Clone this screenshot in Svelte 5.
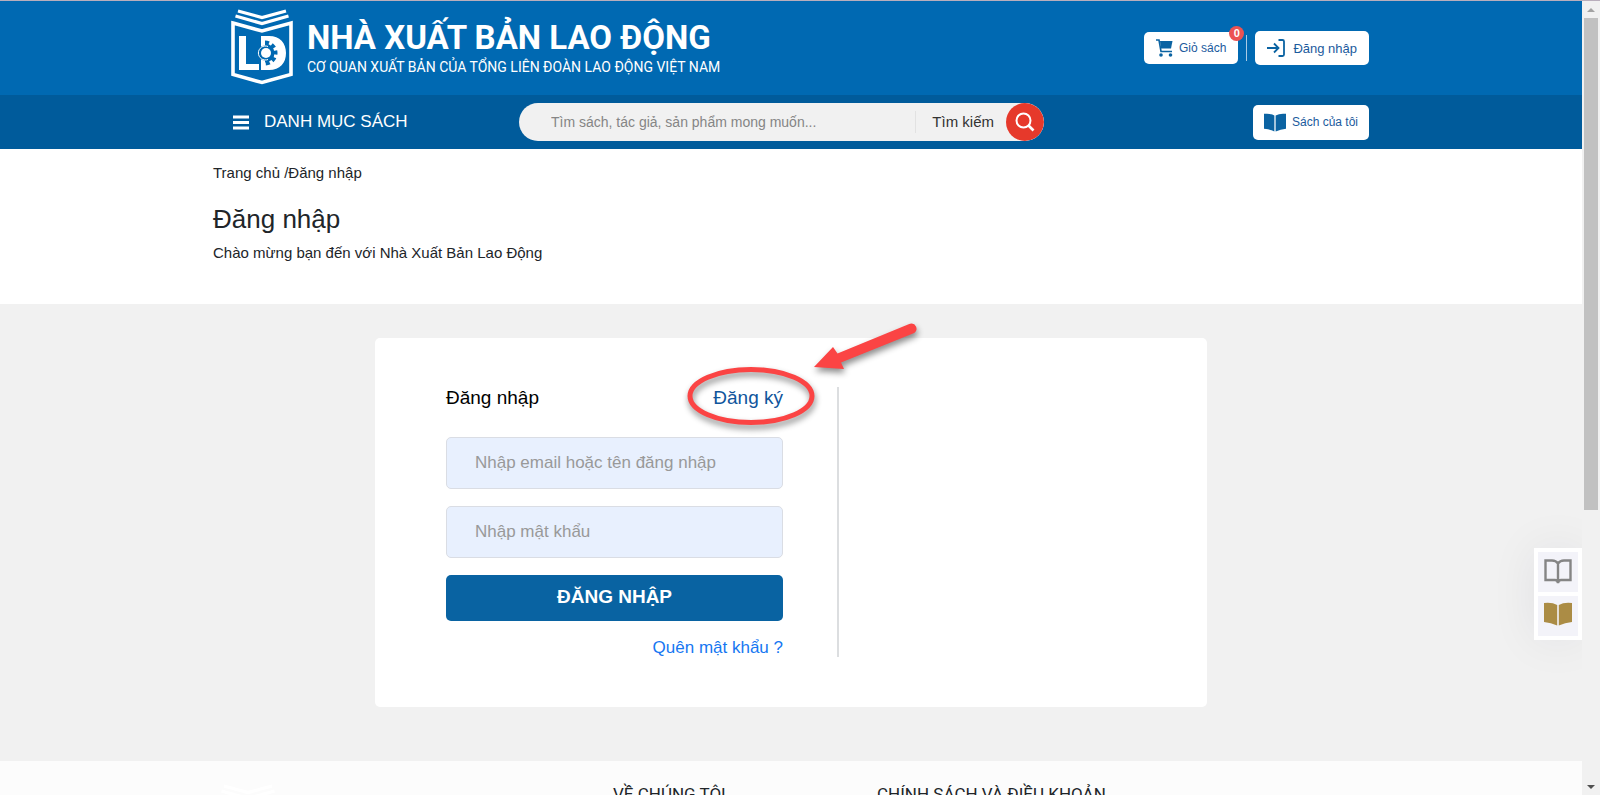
<script lang="ts">
  let keyword = $state('');
  let username = $state('');
  let password = $state('');
  let cartCount = $state(0);

  const footerColumns = ['VỀ CHÚNG TÔI', 'CHÍNH SÁCH VÀ ĐIỀU KHOẢN'];

  function submit(event: SubmitEvent) {
    event.preventDefault();
  }
</script>

{#snippet logo()}
  <svg class="logo" viewBox="0 0 62 78" aria-hidden="true">
    <g fill="none" stroke="currentColor">
      <path d="M7 2 31 8.500 55 2" stroke-width="3.200" />
      <path d="M4.500 7 31 14.500 57.500 7" stroke-width="3.200" />
      <path d="M2 14 31 22 60 14V65.500L31 73.500 2 65.500Z" stroke-width="3.600" />
    </g>
    <path fill="currentColor" d="M8 27h7v28h13v6H8zM30 27h8c11 0 17 7 17 17S49 61 38 61h-8z" />
    <!-- half gear cut out of the D -->
    <path class="cut" d="M34 34.500a9.500 9.500 0 0 1 0 19z" />
    <path class="teeth" d="M34 33.500a10.500 10.500 0 0 1 0 21" />
    <circle class="cut" cx="34" cy="44" r="7.500" />
    <circle cx="35" cy="44" r="5" fill="currentColor" />
    <path d="M37 37.500a7 7 0 1 0 0 13" fill="none" stroke="currentColor" stroke-width="1" />
  </svg>
{/snippet}

{#snippet openBook()}
  <svg class="book" viewBox="0 0 28 24" aria-hidden="true">
    <path fill="currentColor" d="M0 1Q8 0 13.200 3V23.500Q7 20.500 0 20ZM28 1Q20 0 14.800 3V23.500Q21 20.500 28 20Z" />
  </svg>
{/snippet}

<div class="window">
  <div class="page">
    <header>
      <div class="container top-bar">
        <a class="brand" href="#home">
          {@render logo()}
          <span class="brand-text">
            <span class="brand-name">NHÀ XUẤT BẢN LAO ĐỘNG</span>
            <span class="brand-sub">CƠ QUAN XUẤT BẢN CỦA TỔNG LIÊN ĐOÀN LAO ĐỘNG VIỆT NAM</span>
          </span>
        </a>
        <div class="actions">
          <a class="pill cart" href="#cart">
            <svg width="17" height="18" viewBox="0 0 17 18" aria-hidden="true">
              <path fill="currentColor" d="M4 2h12.500L15 9.500H5z" />
              <path d="M0 1H3L5 12.500H16" fill="none" stroke="currentColor" stroke-width="1.600" />
              <circle cx="5" cy="16" r="1.800" fill="currentColor" />
              <circle cx="14.500" cy="16" r="1.800" fill="currentColor" />
            </svg>
            Giỏ sách
            <span class="badge">{cartCount}</span>
          </a>
          <span class="separator"></span>
          <a class="pill login" href="#login">
            <svg width="18" height="18" viewBox="0 0 18 18" aria-hidden="true">
              <path d="M0 9H11M7 4.500 11.500 9 7 13.500M11.500 1H15.500Q17 1 17 2.500V15.500Q17 17 15.500 17H11.500" fill="none" stroke="currentColor" stroke-width="1.800" />
            </svg>
            Đăng nhập
          </a>
        </div>
      </div>
    </header>

    <nav>
      <div class="container nav-bar">
        <button class="menu" type="button">
          <svg width="16" height="15" viewBox="0 0 16 15" aria-hidden="true">
            <path d="M0 2H16M0 7.500H16M0 13H16" stroke="currentColor" stroke-width="3" />
          </svg>
          DANH MỤC SÁCH
        </button>
        <form class="search" onsubmit={submit}>
          <input type="text" aria-label="Tìm sách" placeholder="Tìm sách, tác giả, sản phẩm mong muốn..." bind:value={keyword} />
          <button type="submit">
            <span class="search-label">Tìm kiếm</span>
            <span class="search-icon">
              <svg width="20" height="20" viewBox="0 0 20 20" aria-hidden="true">
                <circle cx="8.500" cy="8.500" r="7" fill="none" stroke="currentColor" stroke-width="2" />
                <path d="M13 13 18.500 18.500" stroke="currentColor" stroke-width="2.600" />
              </svg>
            </span>
          </button>
        </form>
        <a class="pill my-books" href="#my-books">
          {@render openBook()}
          Sách của tôi
        </a>
      </div>
    </nav>

    <section class="intro">
      <div class="container">
        <div class="breadcrumb"><a href="#home">Trang chủ</a> /<span>Đăng nhập</span></div>
        <h1>Đăng nhập</h1>
        <p>Chào mừng bạn đến với Nhà Xuất Bản Lao Động</p>
      </div>
    </section>

    <main>
      <div class="card">
        <form class="login-form" onsubmit={submit}>
          <div class="tabs">
            <h2>Đăng nhập</h2>
            <div class="register">
              <a href="#register">Đăng ký</a>
              <svg class="callout" width="244" height="120" viewBox="0 0 244 120" aria-hidden="true">
                <ellipse cx="72" cy="76" rx="61" ry="26.500" fill="none" stroke="#fb4444" stroke-width="5" />
                <path d="M229 4.500Q235 2 237 6.500T234 13.500L162 42.500 165 49 135 47 154 27 158.500 33.500Z" fill="#fb4444" />
              </svg>
            </div>
          </div>
          <input type="text" aria-label="Email hoặc tên đăng nhập" placeholder="Nhập email hoặc tên đăng nhập" bind:value={username} />
          <input type="password" aria-label="Mật khẩu" placeholder="Nhập mật khẩu" bind:value={password} />
          <button class="submit" type="submit">ĐĂNG NHẬP</button>
          <a class="forgot" href="#forgot">Quên mật khẩu ?</a>
        </form>
      </div>
    </main>

    <footer>
      <div class="container footer-grid">
        <div class="footer-logo">{@render logo()}</div>
        {#each footerColumns as title}
          <h3>{title}</h3>
        {/each}
      </div>
    </footer>

    <aside>
      <button type="button" aria-label="Đọc sách">
        <svg class="book" viewBox="0 0 28 26" aria-hidden="true">
          <path d="M14 4.500Q12 1.500 8 1.500H1.500V21H11Q13.500 21 14 24Q14.500 21 17 21H26.500V1.500H20Q16 1.500 14 4.500ZM14 4V22" fill="none" stroke="currentColor" stroke-width="2.400" />
        </svg>
      </button>
      <button class="gold" type="button" aria-label="Sách của tôi">
        {@render openBook()}
      </button>
    </aside>
  </div>

  <div class="scrollbar" aria-hidden="true">
    <span class="arrow up"></span>
    <span class="thumb"></span>
    <span class="arrow down"></span>
  </div>
</div>

<style>
  :global(body) {
    margin: 0;
    background: #fff;
  }

  .window {
    display: flex;
    height: 100vh;
    box-sizing: border-box;
    overflow: hidden;
    border-top: 1px solid #b9aebc;
    font-family: 'Liberation Sans', Arial, sans-serif;
    font-size: 15px;
    color: #212529;
  }

  .page {
    position: relative;
    flex: 1;
    min-width: 0;
    overflow: hidden;
  }

  a {
    color: inherit;
    text-decoration: none;
  }

  button,
  input {
    font-family: inherit;
  }

  button {
    cursor: pointer;
  }

  .container {
    box-sizing: border-box;
    max-width: 1156px;
    margin: 0 auto;
  }

  header {
    background: #0069b2;
    color: #fff;
  }

  .top-bar {
    display: flex;
    align-items: center;
    justify-content: space-between;
    height: 94px;
    padding-left: 18px;
  }

  .brand {
    display: flex;
    gap: 14px;
    font-family: Roboto, sans-serif;
  }

  .logo {
    width: 62px;
    height: 78px;
  }

  .cut {
    fill: #0069b2;
  }

  .teeth {
    fill: none;
    stroke: #0069b2;
    stroke-width: 4;
    stroke-dasharray: 4 3;
  }

  .brand-text {
    display: flex;
    flex-direction: column;
    padding-top: 9px;
    white-space: nowrap;
  }

  .brand-name {
    font-size: 33px;
    font-weight: 700;
    line-height: 40px;
  }

  .brand-sub {
    font-size: 14px;
    line-height: 18px;
  }

  .actions {
    display: flex;
    align-items: center;
    gap: 8px;
  }

  .pill {
    position: relative;
    display: flex;
    align-items: center;
    box-sizing: border-box;
    border-radius: 5px;
    background: #fff;
    color: #1b5a9d;
    font-size: 12px;
    white-space: nowrap;
  }

  .cart {
    gap: 6px;
    height: 32px;
    padding: 0 12px;
  }

  .login {
    gap: 8px;
    height: 34px;
    padding: 0 12px;
    font-size: 13px;
  }

  .my-books {
    gap: 6px;
    height: 35px;
    padding: 0 11px;
  }

  .my-books .book {
    width: 22px;
    height: 19px;
  }

  .pill svg {
    color: #0b63a2;
  }

  .badge {
    position: absolute;
    top: -6px;
    right: -6px;
    width: 15px;
    height: 15px;
    border-radius: 50%;
    background: #ec5252;
    color: #fff;
    font-size: 11px;
    font-weight: 700;
    line-height: 15px;
    text-align: center;
  }

  .separator {
    width: 1px;
    height: 26px;
    background: #a9cbe5;
  }

  nav {
    background: #005b9b;
  }

  .nav-bar {
    display: grid;
    grid-template-columns: 286px 525px 1fr;
    align-items: center;
    height: 54px;
    padding-left: 20px;
  }

  .menu {
    display: flex;
    align-items: center;
    gap: 15px;
    padding: 0;
    border: 0;
    background: none;
    color: #fff;
    font-size: 17px;
  }

  .search {
    display: flex;
    height: 38px;
    border-radius: 19px;
    background: #f1f1f1;
    overflow: hidden;
  }

  .search input {
    flex: 1;
    min-width: 0;
    padding: 0 0 0 32px;
    border: 0;
    background: none;
    font-size: 14px;
    outline: none;
  }

  .search input::placeholder {
    color: #858585;
  }

  .search button {
    display: flex;
    align-items: center;
    padding: 0;
    border: 0;
    background: none;
    color: #333;
    font-size: 15px;
  }

  .search-label {
    padding: 0 12px 0 16px;
    border-left: 1px solid #e2e2e2;
    line-height: 22px;
  }

  .search-icon {
    display: flex;
    align-items: center;
    justify-content: center;
    width: 38px;
    height: 38px;
    border-radius: 50%;
    background: #e6392b;
    color: #fff;
  }

  .my-books {
    justify-self: end;
  }

  .intro {
    height: 155px;
    box-sizing: border-box;
    padding-top: 14px;
    background: #fff;
  }

  .breadcrumb {
    line-height: 20px;
  }

  h1 {
    margin: 20px 0 8px;
    font-size: 26px;
    font-weight: 400;
    line-height: 32px;
  }

  p {
    margin: 0;
    line-height: 20px;
  }

  main {
    padding: 34px 0 54px;
    background: #f1f1f1;
  }

  .card {
    box-sizing: border-box;
    max-width: 832px;
    margin: 0 auto;
    padding: 49px 0 50px 71px;
    border-radius: 5px;
    background: #fff;
  }

  .login-form {
    display: flex;
    flex-direction: column;
    gap: 17px;
    width: 337px;
    padding-right: 54px;
    border-right: 2px solid #dcdee0;
  }

  .tabs {
    display: flex;
    justify-content: space-between;
    height: 33px;
    font-size: 19px;
    line-height: 22px;
  }

  h2 {
    margin: 0;
    color: #000;
    font-size: 19px;
    font-weight: 400;
  }

  .register {
    position: relative;
    color: #0f559c;
  }

  .callout {
    position: absolute;
    top: -67px;
    left: -34px;
    filter: drop-shadow(1px 4px 3px rgba(0, 0, 0, 0.45));
    pointer-events: none;
  }

  .login-form input {
    box-sizing: border-box;
    width: 100%;
    height: 52px;
    padding: 0 28px;
    border: 1px solid #dadde4;
    border-radius: 5px;
    background: #e8f0fe;
    font-size: 17px;
  }

  .login-form input::placeholder {
    color: #999;
  }

  .submit {
    height: 46px;
    padding: 0 0 3px;
    border: 0;
    border-radius: 5px;
    background: #0963a2;
    color: #fff;
    font-size: 19px;
    font-weight: 700;
  }

  .forgot {
    align-self: flex-end;
    color: #1677f2;
    font-size: 17px;
    line-height: 19px;
  }

  footer {
    background: #fcfcfc;
  }

  .footer-grid {
    display: grid;
    grid-template-columns: 400px 264px 1fr;
    padding: 23px 0 40px;
  }

  .footer-logo {
    padding-left: 4px;
    color: #fff;
  }

  h3 {
    margin: 0;
    font-family: Roboto, sans-serif;
    font-size: 17px;
    font-weight: 400;
    line-height: 20px;
  }

  aside {
    position: absolute;
    top: 547px;
    right: 0;
    display: flex;
    flex-direction: column;
    gap: 4px;
    padding: 4px;
    background: #fff;
    box-shadow: 0 0 48px rgba(0, 0, 60, 0.07);
  }

  aside button {
    display: flex;
    align-items: center;
    justify-content: center;
    width: 40px;
    height: 40px;
    padding: 0;
    border: 0;
    background: #f3f3f9;
    color: #858585;
  }

  aside .book {
    width: 28px;
    height: 26px;
  }

  aside .gold {
    padding-bottom: 4px;
    color: #ab8c45;
  }

  .scrollbar {
    display: flex;
    flex-direction: column;
    align-items: center;
    width: 18px;
    background: #f1f1f1;
  }

  .arrow {
    margin: 7px 0 6px;
    border: 4px solid transparent;
  }

  .up {
    border-top: 0;
    border-bottom-color: #a3a3a3;
  }

  .down {
    margin-top: auto;
    border-bottom: 0;
    border-top-color: #505050;
  }

  .thumb {
    width: 14px;
    height: 62%;
    background: #c1c1c1;
  }
</style>
